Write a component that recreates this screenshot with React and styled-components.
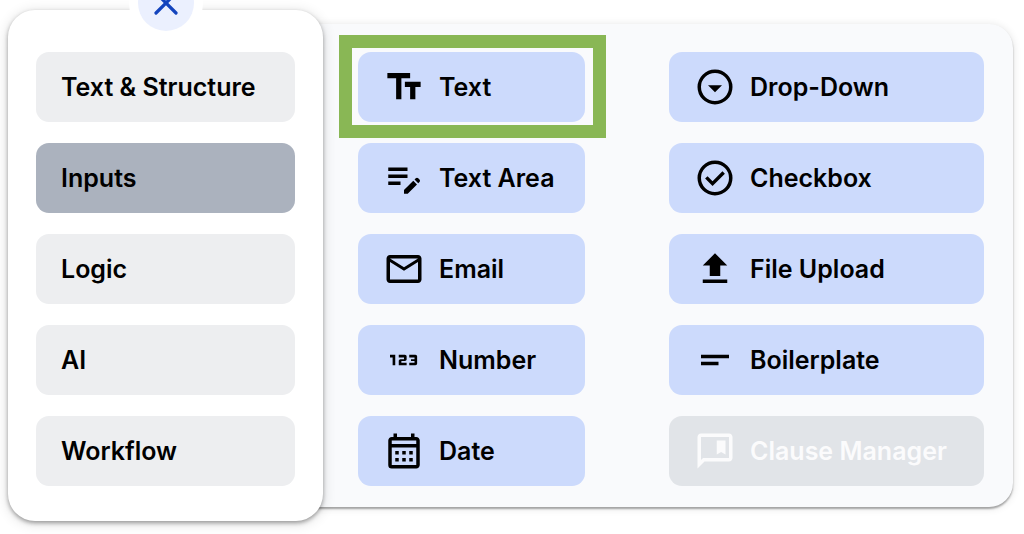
import React, { useState } from 'react'
import styled, { createGlobalStyle } from 'styled-components'
import {
  MdTextFields,
  MdEditNote,
  MdMailOutline,
  Md123,
  MdOutlineCalendarMonth,
  MdFileUpload,
  MdShortText,
} from 'react-icons/md'

const GlobalStyle=createGlobalStyle`
    *{
        box-sizing:border-box;
    }
    body{
        margin:0;
        background-color:#ffffff;
        font-family:'Inter', sans-serif;
    }
`;

const Container=styled.div`
    display:grid;
    grid-template-columns:minmax(0, 315fr) minmax(0, 690fr);
    align-items:center;
    padding:10px 11px 13px 8px;
    overflow:hidden;
`;

const Sidebar=styled.nav`
    position:relative;
    z-index:1;
    display:flex;
    flex-direction:column;
    gap:21px;
    padding:42px 28px 35px;
    background-color:#ffffff;
    border-radius:27px;
    box-shadow:0 2px 4px rgba(0,0,0,0.35), 0 2px 14px rgba(0,0,0,0.14);
`;

const CloseButton=styled.button`
    position:absolute;
    top:-35px;
    left:50%;
    margin-left:-28px;
    width:56px;
    height:56px;
    padding:0;
    display:flex;
    align-items:center;
    justify-content:center;
    border:none;
    border-radius:50%;
    color:#1344bd;
    background-color:#ebf0fe;
    box-shadow:0 0 0 9px #ffffff;
    cursor:pointer;
`;

const Button=styled.button`
    position:relative;
    display:flex;
    align-items:center;
    height:70px;
    padding:0 25px;
    border:none;
    border-radius:13px;
    font-family:inherit;
    font-size:25px;
    font-weight:600;
    line-height:30px;
    text-align:left;
    white-space:nowrap;
    color:#000000;
    cursor:pointer;
`;

const CategoryButton=styled(Button)`
    background-color:${props=>props.$active ? '#abb2be' : '#edeef0'};
`;

/* runs a little way under the rounded edge of the sidebar */
const Panel=styled.main`
    display:grid;
    grid-template-columns:minmax(0, 227fr) minmax(0, 315fr);
    column-gap:84px;
    margin-left:-20px;
    padding:28px 29px 21px 55px;
    background-color:#f9fafc;
    border-radius:0 24px 24px 0;
    box-shadow:0 2px 2px rgba(0,0,0,0.32), 0 1px 8px rgba(0,0,0,0.12);
`;

const Column=styled.div`
    display:flex;
    flex-direction:column;
    gap:21px;
`;

const FieldButton=styled(Button)`
    gap:14px;
    background-color:#ccdafc;

    svg{
        flex:none;
        width:42px;
        height:42px;
    }
    &:disabled{
        color:#fbfbfc;
        background-color:#e1e4e8;
        cursor:default;
    }
`;

const Highlight=styled.span`
    position:absolute;
    top:-17px;
    right:-21px;
    bottom:-16px;
    left:-19px;
    border:13px solid #89b755;
    pointer-events:none;
`;

const CloseIcon = () => (
  <svg width="24" height="24" viewBox="0 0 24 24" fill="none" stroke="currentColor" strokeWidth="3.2" strokeLinecap="round" aria-hidden="true">
    <path d="M2 2l20 20M22 2L2 22" />
  </svg>
)

const DropDownIcon = () => (
  <svg viewBox="0 0 24 24" fill="currentColor" aria-hidden="true">
    <circle cx="12" cy="12" r="9" fill="none" stroke="currentColor" strokeWidth="2" />
    <path d="M12 15l4-4H8z" />
  </svg>
)

const CheckIcon = () => (
  <svg viewBox="0 0 24 24" fill="currentColor" aria-hidden="true">
    <circle cx="12" cy="12" r="9" fill="none" stroke="currentColor" strokeWidth="2" />
    <path d="M10.6 16.6l7.05-7.05-1.4-1.4-5.65 5.65-2.85-2.85-1.4 1.4z" />
  </svg>
)

const ClauseIcon = () => (
  <svg viewBox="0 0 24 24" fill="currentColor" aria-hidden="true">
    <path fillRule="evenodd" d="M2 22V4c0-1.1.9-2 2-2h16c1.1 0 2 .9 2 2v12c0 1.1-.9 2-2 2H6zm2-4.85L5.15 16H20V4H4z" />
    <path d="M13 14V6h5v8l-2.5-1.5z" />
  </svg>
)

const categories=['Text & Structure', 'Inputs', 'Logic', 'AI', 'Workflow'];

const columns=[
  [
    { label:'Text', Icon:MdTextFields, highlighted:true },
    { label:'Text Area', Icon:MdEditNote },
    { label:'Email', Icon:MdMailOutline },
    { label:'Number', Icon:Md123 },
    { label:'Date', Icon:MdOutlineCalendarMonth },
  ],
  [
    { label:'Drop-Down', Icon:DropDownIcon },
    { label:'Checkbox', Icon:CheckIcon },
    { label:'File Upload', Icon:MdFileUpload },
    { label:'Boilerplate', Icon:MdShortText },
    { label:'Clause Manager', Icon:ClauseIcon, disabled:true },
  ],
];

const App = () => {

    const [active,setActive]=useState('Inputs');

  return (
    <Container>
        <GlobalStyle/>
        <Sidebar>
            <CloseButton type="button" aria-label="Close">
                <CloseIcon/>
            </CloseButton>
            {categories.map(name=>(
                <CategoryButton key={name} type="button" $active={name===active} onClick={()=>setActive(name)}>
                    {name}
                </CategoryButton>
            ))}
        </Sidebar>
        <Panel>
            {columns.map((fields,index)=>(
                <Column key={index}>
                    {fields.map(({label,Icon,highlighted,disabled})=>(
                        <FieldButton key={label} type="button" disabled={disabled}>
                            <Icon/>
                            {label}
                            {highlighted && <Highlight/>}
                        </FieldButton>
                    ))}
                </Column>
            ))}
        </Panel>
    </Container>
  )
}

export default App
